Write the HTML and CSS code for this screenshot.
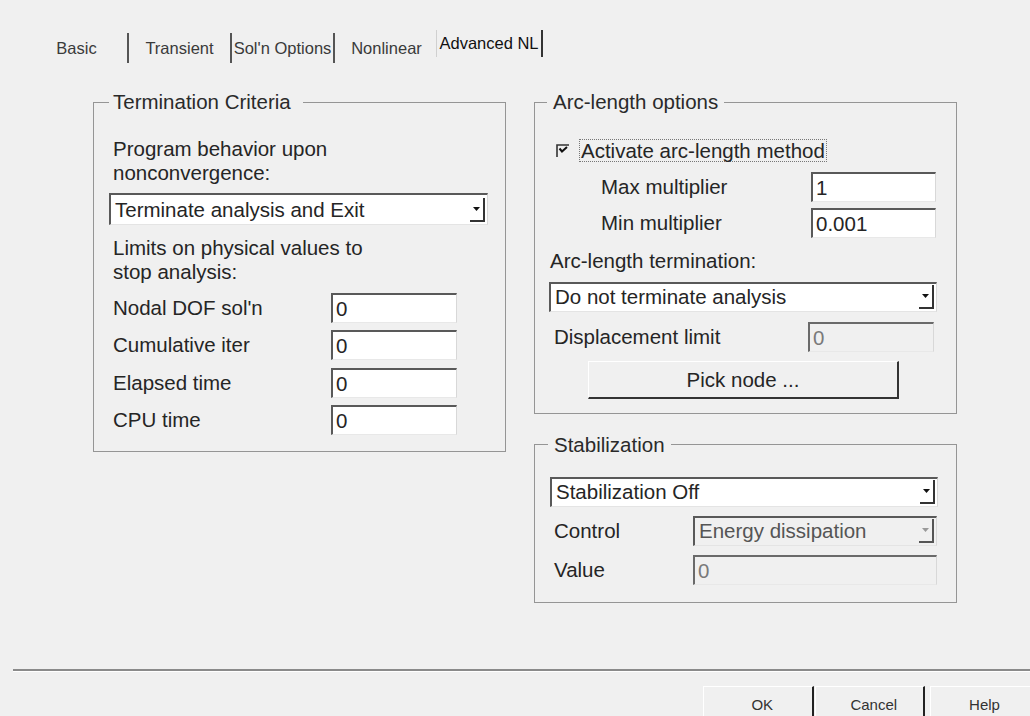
FILE: index.html
```html
<!DOCTYPE html>
<html lang="en">
<head>
<meta charset="utf-8">
<title>Analysis Options</title>
<link rel="stylesheet" href="styles.css">
</head>
<body>
<div class="dialog">
  <div class="tabs">
    <div class="tab sep">Basic</div>
    <div class="tab sep">Transient</div>
    <div class="tab sep">Sol'n Options</div>
    <div class="tab">Nonlinear</div>
    <div class="tab active">Advanced NL</div>
  </div>

  <div class="panel">
    <fieldset class="group group-term">
      <legend>Termination Criteria</legend>
      <p class="text">Program behavior upon<br>nonconvergence:</p>
      <div class="combo combo-term">
        <span class="combo-value">Terminate analysis and Exit</span>
        <span class="combo-btn"><svg width="7" height="4" viewBox="0 0 7 4"><path d="M0 0H7L3.5 4Z" fill="#111"/></svg></span>
      </div>
      <p class="text text-limits">Limits on physical values to<br>stop analysis:</p>
      <div class="fields fields-term">
        <span class="label">Nodal DOF sol'n</span><span class="field">0</span>
        <span class="label">Cumulative iter</span><span class="field">0</span>
        <span class="label">Elapsed time</span><span class="field">0</span>
        <span class="label">CPU time</span><span class="field">0</span>
      </div>
    </fieldset>

    <div class="col-right">
      <fieldset class="group group-arc">
        <legend>Arc-length options</legend>
        <div class="check-row">
          <svg class="check" width="13" height="13" viewBox="0 0 13 13">
            <path d="M1 13V1H13" fill="none" stroke="#333" stroke-width="1.6"/>
            <path d="M3.5 4.5L6 7.5L11 3" fill="none" stroke="#111" stroke-width="2"/>
          </svg>
          <span class="focus-label">Activate arc-length method</span>
        </div>
        <div class="fields fields-mult">
          <span class="label">Max multiplier</span><span class="field">1</span>
          <span class="label">Min multiplier</span><span class="field">0.001</span>
        </div>
        <p class="text text-arcterm">Arc-length termination:</p>
        <div class="combo combo-arc">
          <span class="combo-value">Do not terminate analysis</span>
          <span class="combo-btn"><svg width="7" height="4" viewBox="0 0 7 4"><path d="M0 0H7L3.5 4Z" fill="#111"/></svg></span>
        </div>
        <div class="fields fields-disp">
          <span class="label">Displacement limit</span><span class="field field-off">0</span>
        </div>
        <div class="push-btn pick-btn">Pick node ...</div>
      </fieldset>

      <fieldset class="group group-stab">
        <legend>Stabilization</legend>
        <div class="combo combo-stab">
          <span class="combo-value">Stabilization Off</span>
          <span class="combo-btn"><svg width="7" height="4" viewBox="0 0 7 4"><path d="M0 0H7L3.5 4Z" fill="#111"/></svg></span>
        </div>
        <div class="fields fields-stab">
          <span class="label">Control</span>
          <div class="combo combo-off">
            <span class="combo-value">Energy dissipation</span>
            <span class="combo-btn"><svg width="7" height="4" viewBox="0 0 7 4"><path d="M0 0H7L3.5 4Z" fill="#999"/></svg></span>
          </div>
          <span class="label">Value</span><span class="field field-off">0</span>
        </div>
      </fieldset>
    </div>
  </div>

  <div class="footer">
    <div class="footer-rule"></div>
    <div class="footer-buttons">
      <div class="foot-btn btn-ok">OK</div>
      <div class="foot-btn btn-cancel">Cancel</div>
      <div class="foot-btn btn-help">Help</div>
    </div>
  </div>
</div>
</body>
</html>
```
FILE: styles.css
```css
html, body {
  margin: 0;
  height: 100%;
  overflow: hidden;
}

body {
  background: #f0f0f0;
  font-family: "Liberation Sans", Arial, sans-serif;
  font-size: 20.5px;
  color: #252525;
}

/* ---------- tab strip ---------- */
.tabs {
  display: flex;
  align-items: flex-start;
  padding: 33px 0 0 26px;
  height: 30px;
  font-size: 16.5px;
}

.tab {
  width: 103px;
  height: 30px;
  line-height: 30px;
  box-sizing: border-box;
  text-align: center;
  color: #3a3a3a;
  white-space: nowrap;
}

.tab.sep {
  border-right: 2px solid #555;
}

.tab.active {
  width: 107px;
  height: 27px;
  line-height: 27px;
  margin: -3px 0 0 -2px;
  color: #111;
  border-right: 2px solid #333;
  border-left: 1px solid #d0d0d0;
}

/* ---------- panel ---------- */
.panel {
  display: flex;
  align-items: flex-start;
  padding: 27px 0 0 93px;
}

.col-right {
  display: flex;
  flex-direction: column;
  margin-left: 28px;
}

.group {
  margin: 0;
  min-width: 0;
  box-sizing: border-box;
  border: 1px solid #959595;
}

.group legend {
  padding: 0 6px;
  margin-left: -2px;
  line-height: 24px;
  color: #2a2a2a;
}

.group-term {
  width: 413px;
  padding: 23px 17px 16px 15px;
}

.group-term legend {
  padding: 0 12px 0 4px;
  margin-left: 0;
}

.group-arc {
  width: 423px;
  padding: 25px 19px 14px 14px;
}

.group-stab {
  width: 423px;
  margin-top: 19px;
  padding: 20px 18px 17px 15px;
}

.text {
  margin: 0;
  padding-left: 4px;
  line-height: 23.5px;
}

.text-limits {
  margin-top: 11px;
}

.text-arcterm {
  margin-top: 11px;
  padding-left: 1px;
}

/* ---------- combo boxes ---------- */
.combo {
  display: flex;
  align-items: center;
  height: 30px;
  box-sizing: border-box;
  background: #fff;
  border-top: 2px solid #595959;
  border-left: 2px solid #595959;
  border-right: 1px solid #d8d8d8;
  border-bottom: 1px solid #e4e4e4;
  white-space: nowrap;
}

.combo-term {
  height: 32px;
  margin-top: 9px;
}

.combo-arc {
  margin-top: 9px;
}

.combo-value {
  flex: 1;
  padding-left: 4px;
}

.combo-btn {
  display: flex;
  align-items: center;
  justify-content: center;
  width: 15px;
  height: 24px;
  margin-right: 2px;
  box-sizing: border-box;
  border-right: 2px solid #333;
  border-bottom: 2px solid #333;
}

.combo-off {
  background: #f0f0f0;
  color: #555;
}

.combo-off .combo-btn {
  border-color: #555;
}

/* ---------- label / field rows ---------- */
.fields {
  display: grid;
  align-items: center;
}

.fields-term {
  grid-template-columns: 218px 126px;
  row-gap: 7.33px;
  margin: 10px 0 0 4px;
}

.fields-mult {
  grid-template-columns: 210px 125px;
  row-gap: 6px;
  margin: 10px 0 0 52px;
}

.fields-disp {
  grid-template-columns: 254px 126px;
  margin: 10px 0 0 5px;
}

.fields-stab {
  grid-template-columns: 139px 244px;
  row-gap: 9px;
  margin: 9px 0 0 4px;
}

.label {
  white-space: nowrap;
}

.field {
  height: 30px;
  box-sizing: border-box;
  padding-left: 3px;
  line-height: 27px;
  background: #fff;
  border-top: 2px solid #595959;
  border-left: 2px solid #595959;
  border-right: 1px solid #d8d8d8;
  border-bottom: 1px solid #e8e8e8;
}

.field-off {
  background: #f0f0f0;
  color: #7a7a7a;
  border-top-color: #6a6a6a;
  border-left-color: #6a6a6a;
}

/* ---------- checkbox ---------- */
.check-row {
  display: flex;
  align-items: center;
  height: 23px;
  margin-left: 7px;
}

.check {
  display: block;
  margin-right: 10px;
}

.focus-label {
  line-height: 21px;
  padding: 0 1px;
  border: 1px dotted #777;
}

/* ---------- push buttons ---------- */
.push-btn {
  box-sizing: border-box;
  text-align: center;
  border-top: 1px solid #fff;
  border-left: 1px solid #fff;
  border-right: 2px solid #333;
  border-bottom: 2px solid #333;
  background: #f0f0f0;
}

.pick-btn {
  width: 311px;
  height: 38px;
  line-height: 35px;
  margin: 9px 0 0 39px;
}

/* ---------- footer ---------- */
.footer {
  margin-top: 66px;
}

.footer-rule {
  margin-left: 13px;
  border-top: 2px solid #8a8a8a;
  border-bottom: 1px solid #fff;
}

.footer-buttons {
  display: flex;
  margin: 14px 0 0 703px;
}

.foot-btn {
  height: 34px;
  box-sizing: border-box;
  line-height: 36px;
  text-align: center;
  font-size: 15px;
  color: #333;
  padding-left: 8px;
  border-top: 1px solid #fff;
  border-left: 1px solid #fff;
}

.btn-ok {
  width: 114px;
  border-right: 2px solid #222;
}

.btn-cancel {
  width: 112px;
  margin-left: 1px;
  border-right: 2px solid #222;
}

.btn-help {
  width: 100px;
  flex-shrink: 0;
  margin-left: 5px;
}
```
